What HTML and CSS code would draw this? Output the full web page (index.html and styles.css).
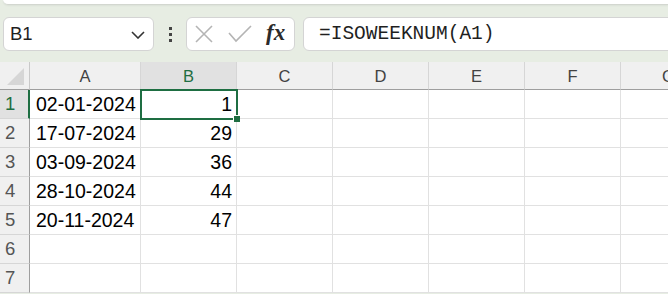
FILE: index.html
```html
<!DOCTYPE html>
<html>
<head>
<meta charset="utf-8">
<link rel="stylesheet" href="styles.css">
</head>
<body>
<div class="app">
  <div class="topbar"></div>
  <div class="fbar">
    <div class="namebox">
      <span class="name">B1</span>
      <svg class="chev" width="14" height="8" viewBox="0 0 14 8"><path d="M1 1 L7 7 L13 1" fill="none" stroke="#333" stroke-width="1.6"/></svg>
    </div>
    <div class="dots"><i></i><i></i><i></i></div>
    <div class="fxbox">
      <svg class="ic" width="20" height="20" viewBox="0 0 20 20"><path d="M2 2 L18 18 M18 2 L2 18" fill="none" stroke="#b4b4b4" stroke-width="1.6"/></svg>
      <svg class="ic" width="24" height="18" viewBox="0 0 24 18"><path d="M1 8 L8 16 L23 1" fill="none" stroke="#b4b4b4" stroke-width="1.6"/></svg>
      <span class="fx">fx</span>
    </div>
    <div class="formula">=ISOWEEKNUM(A1)</div>
  </div>
  <div class="grid">
    <div class="corner"><svg width="20" height="20" viewBox="0 0 20 20"><path d="M19 2 L19 19 L2 19 Z" fill="#d6d6d6"/></svg></div>
    <div class="ch">A</div>
    <div class="ch sel">B</div>
    <div class="ch">C</div>
    <div class="ch">D</div>
    <div class="ch">E</div>
    <div class="ch">F</div>
    <div class="ch">G</div>

    <div class="rh sel">1</div>
    <div class="c">02-01-2024</div>
    <div class="c n active">1<span class="handle"></span></div>
    <div class="c"></div><div class="c"></div><div class="c"></div><div class="c"></div><div class="c"></div>

    <div class="rh">2</div>
    <div class="c">17-07-2024</div>
    <div class="c n">29</div>
    <div class="c"></div><div class="c"></div><div class="c"></div><div class="c"></div><div class="c"></div>

    <div class="rh">3</div>
    <div class="c">03-09-2024</div>
    <div class="c n">36</div>
    <div class="c"></div><div class="c"></div><div class="c"></div><div class="c"></div><div class="c"></div>

    <div class="rh">4</div>
    <div class="c">28-10-2024</div>
    <div class="c n">44</div>
    <div class="c"></div><div class="c"></div><div class="c"></div><div class="c"></div><div class="c"></div>

    <div class="rh">5</div>
    <div class="c">20-11-2024</div>
    <div class="c n">47</div>
    <div class="c"></div><div class="c"></div><div class="c"></div><div class="c"></div><div class="c"></div>

    <div class="rh">6</div>
    <div class="c"></div><div class="c"></div><div class="c"></div><div class="c"></div><div class="c"></div><div class="c"></div><div class="c"></div>

    <div class="rh">7</div>
    <div class="c"></div><div class="c"></div><div class="c"></div><div class="c"></div><div class="c"></div><div class="c"></div><div class="c"></div>
  </div>
</div>
</body>
</html>
```
FILE: styles.css
```css
html, body {
  margin: 0;
  padding: 0;
  background: #ffffff;
  overflow: hidden;
}
.app {
  width: 668px;
  height: 294px;
  overflow: hidden;
  font-family: "Liberation Sans", Arial, sans-serif;
  background: #e7ede3;
}
.topbar {
  height: 4px;
  margin-left: 3px;
  background: #ffffff;
  border-bottom: 1px solid #d3d7d0;
  border-bottom-left-radius: 8px;
  box-shadow: 0 1px 2px rgba(0,0,0,0.05);
}
.fbar {
  display: flex;
  align-items: center;
  padding: 12px 0 11px 3px;
  height: 34px;
}
.namebox {
  box-sizing: border-box;
  width: 151px;
  height: 34px;
  background: #fff;
  border: 1px solid #d4d4d4;
  border-radius: 6px;
  display: flex;
  align-items: center;
  justify-content: space-between;
  padding: 0 8px 0 6px;
}
.name {
  font-size: 18.5px;
  color: #1f1f1f;
}
.chev { margin-top: 1px; }
.dots {
  width: 32px;
  display: flex;
  flex-direction: column;
  align-items: center;
  gap: 3px;
}
.dots i {
  display: block;
  width: 3px;
  height: 3px;
  background: #444;
}
.fxbox {
  box-sizing: border-box;
  width: 109px;
  height: 34px;
  background: #fff;
  border: 1px solid #d4d4d4;
  border-radius: 6px;
  display: flex;
  align-items: center;
  padding: 0 0 0 7px;
}
.fxbox .ic { display: block; }
.fxbox .ic + .ic { margin-left: 14px; }
.fx {
  margin-left: 14px;
  font-family: "Liberation Serif", "Times New Roman", serif;
  font-style: italic;
  font-weight: bold;
  font-size: 23px;
  color: #2b2b2b;
  line-height: 1;
  margin-top: -3px;
}
.formula {
  box-sizing: border-box;
  flex: 1;
  margin-left: 8px;
  margin-right: -8px;
  height: 34px;
  background: #fff;
  border: 1px solid #d4d4d4;
  border-radius: 6px;
  display: flex;
  align-items: center;
  padding-left: 15px;
  font-family: "Liberation Mono", "Courier New", monospace;
  font-size: 19.5px;
  color: #1f1f1f;
}
.grid {
  display: grid;
  grid-template-columns: 30px 111px 96px 96px 96px 96px 96px 96px;
  grid-template-rows: 28px repeat(7, 29px);
  background: #fff;
}
.corner, .ch, .rh {
  background: #f0f0f0;
  box-sizing: border-box;
}
.corner {
  border-right: 1px solid #c9c9c9;
  border-bottom: 1px solid #9e9e9e;
  display: flex;
  align-items: flex-end;
  justify-content: flex-end;
}
.corner svg { display: block; margin: 0 4px 3px 0; }
.ch {
  border-right: 1px solid #d6d6d6;
  border-bottom: 1px solid #9e9e9e;
  display: flex;
  align-items: center;
  justify-content: center;
  font-size: 16.5px;
  color: #424242;
  padding-top: 1px;
}
.ch.sel {
  background: #e1e1e1;
  color: #1e6e42;
  border-bottom: 1px solid #9e9e9e;
}
.rh {
  border-right: 1px solid #9e9e9e;
  border-bottom: 1px solid #d6d6d6;
  display: flex;
  align-items: center;
  padding-left: 5px;
  font-size: 18.5px;
  color: #555;
}
.rh.sel {
  background: #e1e1e1;
  color: #1e6e42;
  border-right: 2px solid #1e6e42;
}
.c {
  box-sizing: border-box;
  border-right: 1px solid #e1e1e1;
  border-bottom: 1px solid #e1e1e1;
  display: flex;
  align-items: center;
  padding: 0 4px 0 6px;
  font-size: 19.5px;
  color: #000;
  position: relative;
}
.c.n { justify-content: flex-end; }
.c.active {
  outline: 2px solid #1e6e42;
  outline-offset: -1px;
  z-index: 2;
}
.handle {
  position: absolute;
  right: -4px;
  bottom: -4px;
  width: 6px;
  height: 6px;
  background: #1e6e42;
  border: 1px solid #fff;
  border-width: 1px 0 0 1px;
}
```
